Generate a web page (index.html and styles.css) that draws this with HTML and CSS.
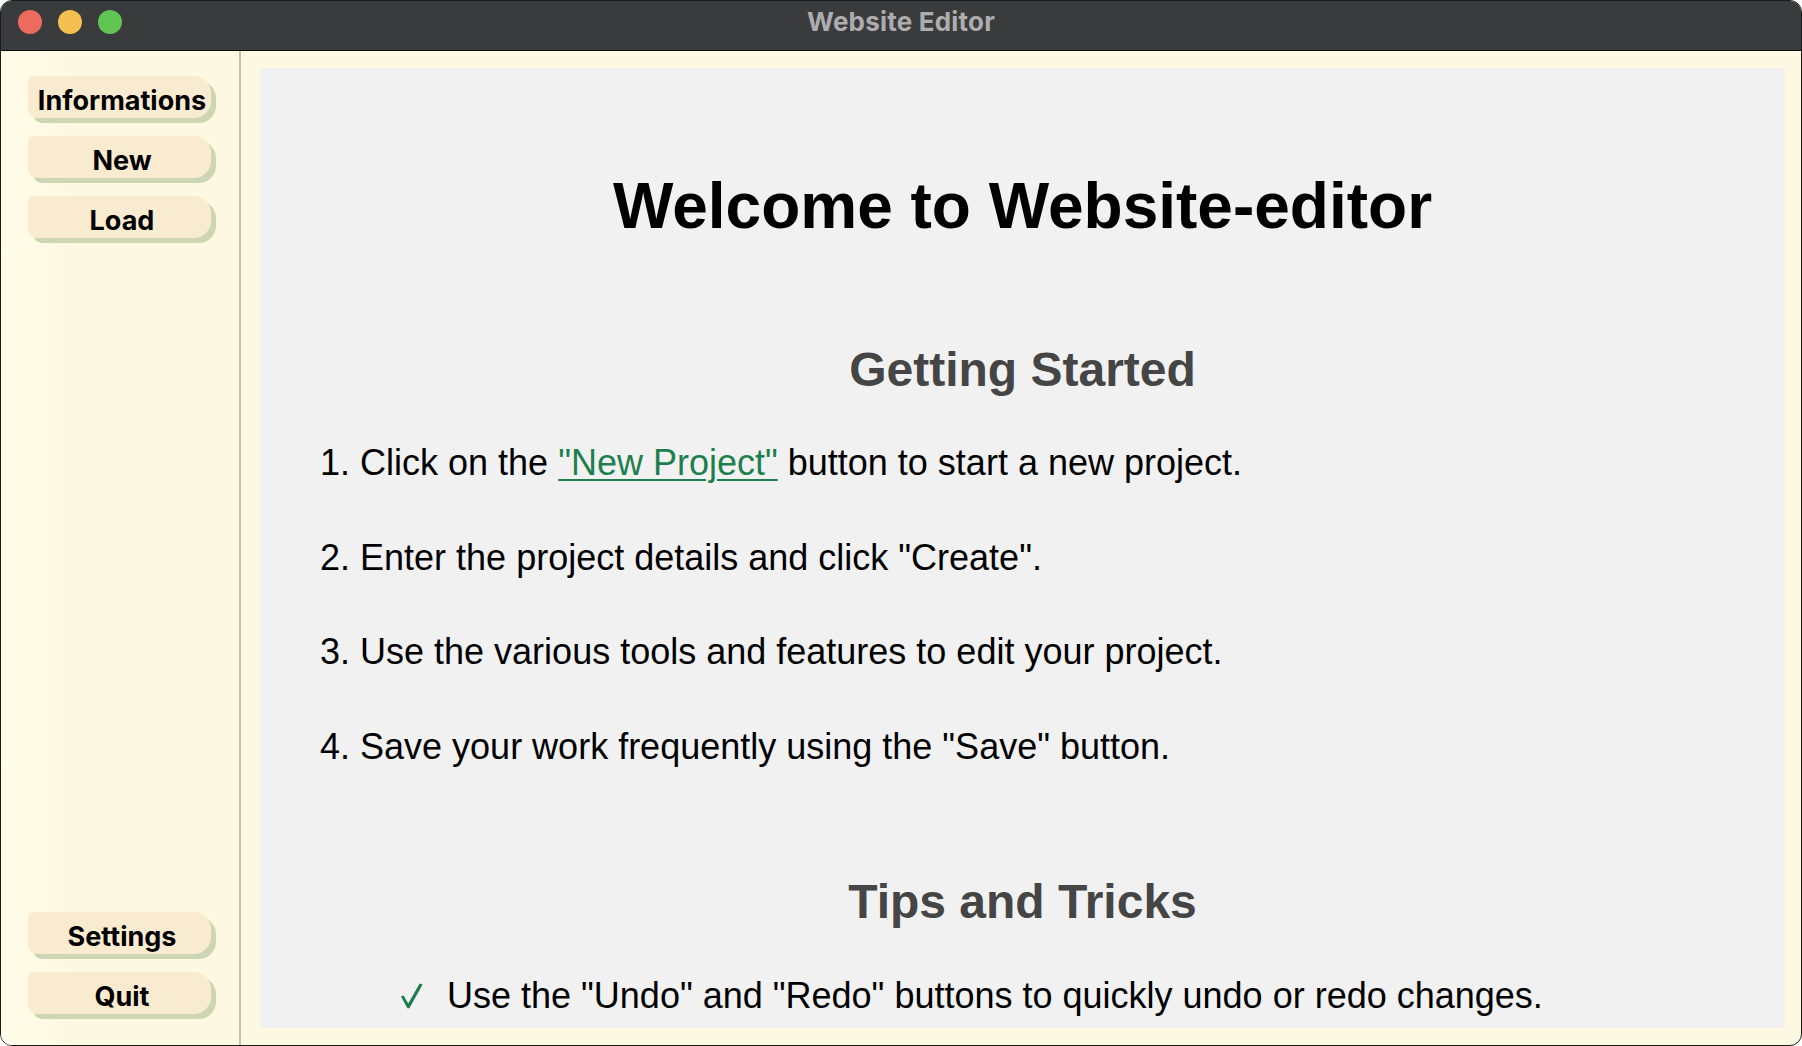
FILE: index.html
```html
<!DOCTYPE html>
<html>
<head>
<meta charset="utf-8">
<title>Website Editor</title>
<link rel="stylesheet" href="styles.css">
</head>
<body>
<div class="window">
  <header class="titlebar">
    <div class="lights">
      <span class="light red"></span>
      <span class="light yellow"></span>
      <span class="light green"></span>
    </div>
    <div class="title">Website Editor</div>
    <div></div>
  </header>
  <div class="body">
    <nav class="sidebar">
      <div class="group">
        <button class="btn">Informations</button>
        <button class="btn">New</button>
        <button class="btn">Load</button>
      </div>
      <div class="group">
        <button class="btn">Settings</button>
        <button class="btn">Quit</button>
      </div>
    </nav>
    <main class="main">
      <section class="panel">
        <h1 class="h1">Welcome to Website-editor</h1>
        <h2 class="h2 h2-first">Getting Started</h2>
        <ol class="steps">
          <li>Click on the <a class="link" href="#">"New Project"</a> button to start a new project.</li>
          <li>Enter the project details and click "Create".</li>
          <li>Use the various tools and features to edit your project.</li>
          <li>Save your work frequently using the "Save" button.</li>
        </ol>
        <h2 class="h2 h2-tips">Tips and Tricks</h2>
        <ul class="tips">
          <li><span class="check"><svg width="22" height="26" viewBox="0 0 22 26"><polygon points="0,13.5 2.6,12.4 7.2,20.5 18.6,0.5 21.6,1.6 8.4,25.2 6.4,25.2" fill="#1f7c4c"/></svg></span>Use the "Undo" and "Redo" buttons to quickly undo or redo changes.</li>
        </ul>
      </section>
    </main>
  </div>
</div>
</body>
</html>
```

FILE: styles.css
```css
html, body {
  margin: 0;
  padding: 0;
  background: #ffffff;
}

.window {
  width: 1802px;
  height: 1046px;
  box-sizing: border-box;
  border: 1px solid #1b1b1b;
  border-radius: 12px;
  overflow: hidden;
  display: flex;
  flex-direction: column;
  background: #fdf8e1;
}

.titlebar {
  height: 49px;
  flex: 0 0 49px;
  background: #3a3b3d;
  border-bottom: 1px solid #0c0c0c;
  display: grid;
  grid-template-columns: 1fr auto 1fr;
  align-items: start;
}

.lights {
  display: flex;
  gap: 16px;
  padding: 9px 0 0 17px;
}

.light {
  width: 24px;
  height: 24px;
  border-radius: 50%;
  display: block;
}
.red { background: #ed6a5e; }
.yellow { background: #f5bf4f; }
.green { background: #61c554; }

.title {
  font-family: Inter, "Liberation Sans", sans-serif;
  font-weight: 700;
  font-size: 26px;
  letter-spacing: 0.2px;
  line-height: 31px;
  padding-top: 5px;
  color: #adadaf;
}

.body {
  flex: 1;
  display: flex;
  min-height: 0;
}

.sidebar {
  width: 240px;
  flex: 0 0 240px;
  border-right: 2px solid #c6c2a7;
  background: linear-gradient(to right, #fffce9 0, #fdf8e1 70px);
  display: flex;
  flex-direction: column;
  justify-content: space-between;
  padding: 25px 0 31px 27px;
  box-sizing: border-box;
}

.group {
  display: flex;
  flex-direction: column;
  gap: 18px;
}

.btn {
  width: 183px;
  height: 42px;
  box-sizing: border-box;
  border: none;
  padding: 7px 0 0 5px;
  margin: 0;
  background: #f9ebcf;
  border-radius: 5px 17px 17px 9px;
  box-shadow: 5px 5px 0 #cdd5b2;
  font-family: Inter, "Liberation Sans", sans-serif;
  font-weight: 700;
  font-size: 27px;
  line-height: 35px;
  color: #000;
  text-align: center;
}

.main {
  flex: 1;
  min-width: 0;
  padding: 17px 16px 17px 19px;
  display: flex;
}

.panel {
  flex: 1;
  background: #f1f1f1;
  overflow: hidden;
  font-family: "Liberation Sans", Arial, sans-serif;
  color: #000;
}

.h1 {
  margin: 101px 0 0 0;
  font-size: 64px;
  line-height: 74px;
  font-weight: 700;
  text-align: center;
}

.h2 {
  margin: 0;
  font-size: 48px;
  line-height: 56px;
  font-weight: 700;
  color: #454545;
  text-align: center;
}

.h2-first { margin-top: 98.5px; }
.h2-tips { margin-top: 106.5px; }

.steps {
  margin: 44.5px 0 0 0;
  padding: 0 0 0 60px;
  list-style-position: inside;
  font-size: 36px;
  line-height: 42px;
}

.steps li {
  margin-bottom: 52.5px;
}
.steps li:last-child { margin-bottom: 0; }

.link {
  color: #1e7f4e;
  text-decoration: underline;
  text-underline-offset: 4px;
  text-decoration-thickness: 2px;
}

.tips {
  list-style: none;
  margin: 45px 0 0 0;
  padding: 0 0 0 141px;
  font-size: 36px;
  line-height: 42px;
}

.tips li {
  display: flex;
  align-items: flex-start;
}

.check {
  width: 46px;
  flex: 0 0 46px;
  padding-top: 8px;
  display: block;
  line-height: 0;
}
```
